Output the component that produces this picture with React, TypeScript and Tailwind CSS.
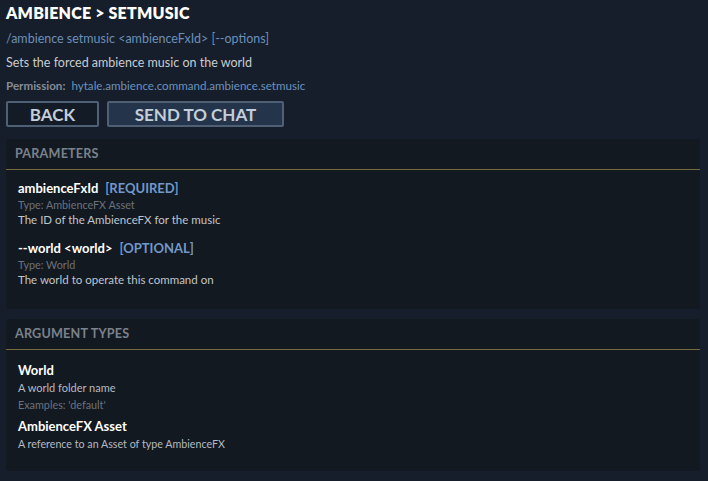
export default function App() {
  return (
    <div
      className="h-[481px] w-[708px] overflow-hidden bg-[#151e2a] pl-[6px] pr-[8px] pt-[4px] text-[#c5cad1]"
      style={{ fontFamily: "Lato, 'Noto Sans', sans-serif" }}
    >
      <h1 className="text-[16px] font-extrabold leading-[18px] tracking-[0.2px] text-white">
        AMBIENCE &gt; SETMUSIC
      </h1>
      <p className="mt-[9px] text-[12.5px] leading-[16px] text-[#6d8fb8]">
        /ambience setmusic &lt;ambienceFxId&gt; [--options]
      </p>
      <p className="mt-[8px] text-[12.5px] leading-[16px] text-[#c8ccd2]">
        Sets the forced ambience music on the world
      </p>
      <p className="mt-[7px] text-[11.6px] leading-[16px]">
        <span className="font-bold text-[#858c96]">Permission:</span>
        <span className="ml-[6px] text-[#6d91bd]">hytale.ambience.command.ambience.setmusic</span>
      </p>
      <div className="mt-[7px] flex gap-[8px]">
        <button className="h-[26px] w-[93px] rounded-[2px] border-2 border-[#4f5f76] bg-[#131b26] text-[17px] font-bold leading-none text-[#c3ced9]">
          BACK
        </button>
        <button className="h-[26px] w-[177px] rounded-[2px] border-2 border-[#4f5f76] bg-[#24344a] text-[17px] font-bold leading-none text-[#c3ced9]">
          SEND TO CHAT
        </button>
      </div>

      <section className="mt-[12px] h-[170px] rounded-[3px] bg-[#121921]">
        <div className="flex h-[31px] items-center border-b border-[#76683f] px-[9px] text-[12.6px] font-bold tracking-[0.2px] text-[#7b828c]">
          PARAMETERS
        </div>
        <div className="px-[12px] pt-[10px]">
          <Param name="ambienceFxId" tag="[REQUIRED]" type="AmbienceFX Asset" desc="The ID of the AmbienceFX for the music" />
          <div className="h-[12px]" />
          <Param name="--world <world>" tag="[OPTIONAL]" type="World" desc="The world to operate this command on" />
        </div>
      </section>

      <section className="mt-[10px] h-[152px] rounded-[3px] bg-[#121921]">
        <div className="flex h-[31px] items-center border-b border-[#76683f] px-[9px] text-[12.6px] font-bold tracking-[0.2px] text-[#7b828c]">
          ARGUMENT TYPES
        </div>
        <div className="px-[12px] pt-[11px]">
          <div className="text-[13px] font-bold leading-[18px] text-white">World</div>
          <div className="text-[11px] leading-[17px] text-[#b4bac2]">A world folder name</div>
          <div className="text-[10.8px] leading-[17px] text-[#6b727d]">Examples: 'default'</div>
          <div className="mt-[2px] text-[13px] font-bold leading-[22px] text-white">AmbienceFX Asset</div>
          <div className="text-[10.7px] leading-[14px] text-[#b4bac2]">A reference to an Asset of type AmbienceFX</div>
        </div>
      </section>
    </div>
  );
}

function Param({ name, tag, type, desc }: { name: string; tag: string; type: string; desc: string }) {
  return (
    <div>
      <div className="flex items-baseline text-[13px] font-bold leading-[17px]">
        <span className="text-white">{name}</span>
        <span className="ml-[7px] text-[#7198c9]">{tag}</span>
      </div>
      <div className="text-[10.8px] leading-[15px] text-[#6b727d]">Type: {type}</div>
      <div className="text-[11.5px] leading-[16px] text-[#c0c5cc]">{desc}</div>
    </div>
  );
}
